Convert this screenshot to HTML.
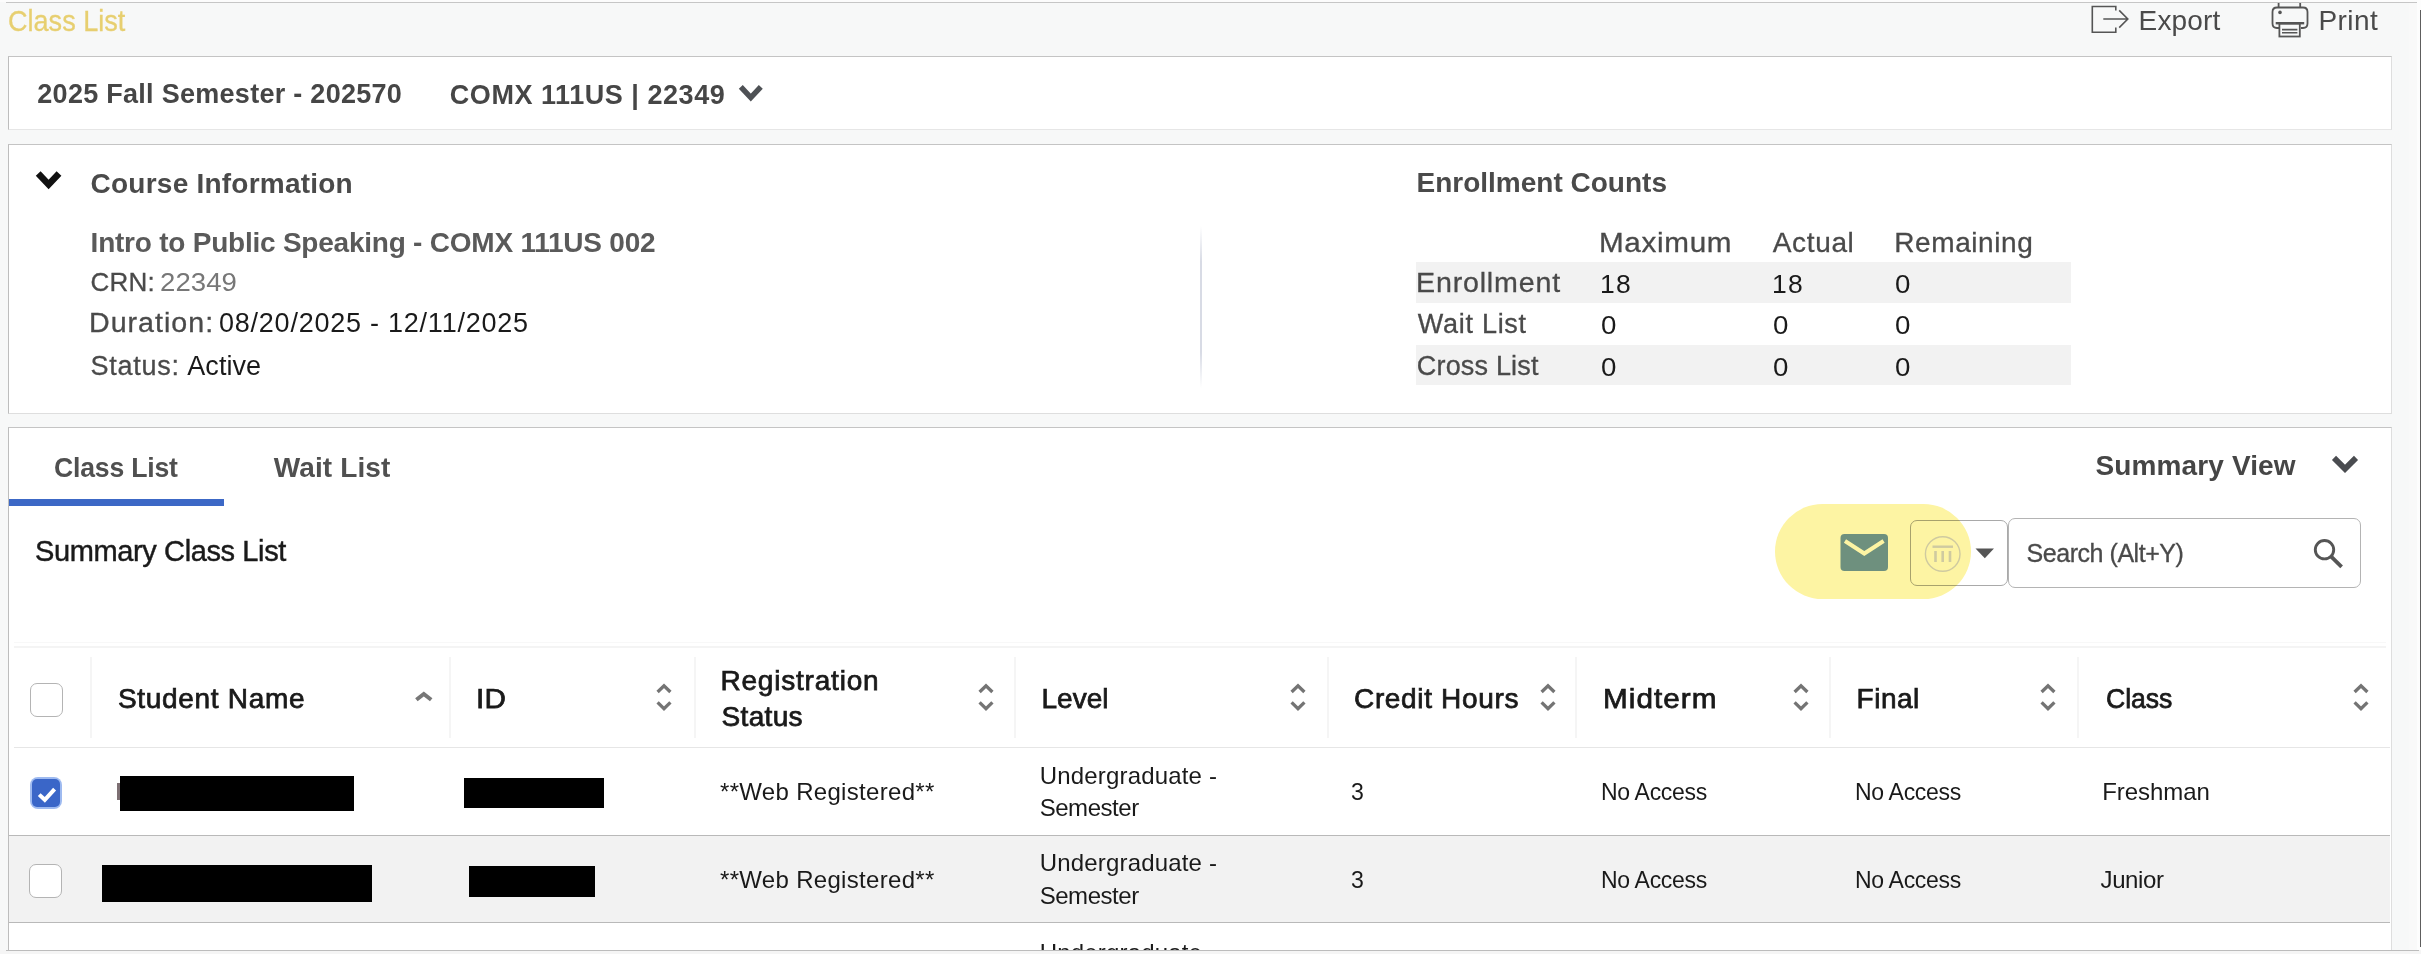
<!DOCTYPE html>
<html lang="en">
<head>
<meta charset="utf-8">
<title>Class List</title>
<style>
html,body{margin:0;padding:0}
body{width:2421px;height:954px;overflow:hidden;position:relative;background:#f7f8f8;font-family:"Liberation Sans",sans-serif}
.t{position:absolute;white-space:nowrap;line-height:1em;display:block}
.a{position:absolute;display:block}
.panel{position:absolute;background:#fff;box-sizing:border-box;border:1px solid #dedede;border-top-color:#c4c4c4;border-left-color:#bdbdbd}
.sep{position:absolute;width:2px;top:657px;height:81px;background:#f5f5f5}
.cb{position:absolute;box-sizing:border-box;background:#fff;border:1px solid #b4b4b4;border-radius:7px}
svg{position:absolute;overflow:visible}
</style>
</head>
<body>
<!-- window chrome lines -->
<div class="a" style="left:0;top:0;width:2421px;height:2px;background:#fcfcfc"></div>
<div class="a" style="left:6px;top:2px;width:2412px;height:1px;background:#c6c6c6"></div>
<div class="a" style="left:2409px;top:3px;width:8px;height:947px;background:#f9f9f9"></div>
<div class="a" style="left:2417px;top:0;width:4px;height:954px;background:#fdfdfd"></div>
<div class="a" style="left:2420px;top:10px;width:1px;height:937px;background:#5e5e5e"></div>

<header>
<span class="t" style="left:7.60px;top:6px;font-size:30px;color:#e7cf70;transform:scaleX(0.9021);transform-origin:0 0;-webkit-text-stroke:0.3px #e7cf70;">Class List</span>
<span class="t" style="left:2138.60px;top:7px;font-size:28px;letter-spacing:0.131px;color:#4a4a4a;">Export</span>
<span class="t" style="left:2318.40px;top:7px;font-size:28px;letter-spacing:0.452px;color:#4a4a4a;">Print</span>
<!-- export icon -->
<svg style="left:2088px;top:2px" width="44" height="36" viewBox="2088 2 44 36" fill="none" stroke="#555" stroke-width="1.6">
<path d="M2115.8 10.6V6.5H2092.3V32.2H2115.8V27.6"/>
<path d="M2103.3 19H2127.4M2119.2 10.4L2127.8 19L2119.2 27.6"/>
</svg>
<!-- print icon -->
<svg style="left:2268px;top:0" width="44" height="40" viewBox="2268 0 44 40" fill="none" stroke="#555" stroke-width="1.8">
<path d="M2278.6 3V7.5M2300.2 3V7.5"/>
<path d="M2279 28H2277Q2272.5 28 2272.5 23.5V12Q2272.5 7.5 2277 7.5H2303Q2307.5 7.5 2307.5 12V23.5Q2307.5 28 2303 28H2301"/>
<path d="M2275.7 23.2H2304.2" stroke-width="2.4"/>
<rect x="2279.4" y="23.6" width="20.4" height="12.9"/>
<path d="M2282 29.6H2297.4M2282 32.8H2297.4" stroke-width="1.6"/>
<circle cx="2280" cy="12.4" r="1.8" fill="#555" stroke="none"/>
</svg>
</header>

<main>
<!-- panel 1: term / course selector -->
<div role="region" aria-label="Term and course selector">
<section class="panel" style="left:8px;top:56px;width:2384px;height:74px;border-bottom-color:#e6e6e6"></section>
<span class="t" style="left:37.30px;top:81px;font-size:27px;letter-spacing:0.280px;color:#464646;font-weight:700;">2025 Fall Semester - 202570</span>
<span class="t" style="left:449.80px;top:82px;font-size:27px;letter-spacing:0.541px;color:#464646;font-weight:700;">COMX 111US | 22349</span>
<svg style="left:736px;top:83px" width="30" height="20" viewBox="736 83 30 20" fill="none" stroke="#4e5155" stroke-width="5.4"><path d="M740.8 86.8L750.8 97.6L760.8 86.8"/></svg>

</div>

<!-- panel 2: course info -->
<div role="region" aria-label="Course Information and Enrollment Counts">
<section class="panel" style="left:8px;top:144px;width:2384px;height:270px"></section>
<svg style="left:33px;top:169px" width="32" height="24" viewBox="33 169 32 24" fill="none" stroke="#111" stroke-width="6.6"><path d="M38.2 173.5L48.6 184.5L59 173.5"/></svg>
<div class="a" style="left:1200px;top:226px;width:2px;height:162px;background:linear-gradient(to bottom,rgba(216,219,229,0),#d8dbe5 22%,#d8dbe5 78%,rgba(216,219,229,0))"></div>
<div class="a" style="left:1416px;top:262px;width:655px;height:41px;background:#f2f2f2"></div>
<div class="a" style="left:1416px;top:345px;width:655px;height:40px;background:#f2f2f2"></div>
<span class="t" style="left:90.60px;top:170px;font-size:28px;letter-spacing:0.228px;color:#4a4a4a;font-weight:700;">Course Information</span>
<span class="t" style="left:90.60px;top:229px;font-size:28px;letter-spacing:-0.229px;color:#5a5a5a;font-weight:700;">Intro to Public Speaking - COMX 111US 002</span>
<span class="t" style="left:90.60px;top:269px;font-size:26px;letter-spacing:0.224px;color:#4a4a4a;-webkit-text-stroke:0.3px #4a4a4a;">CRN:</span>
<span class="t" style="left:159.94px;top:269px;font-size:26px;color:#777;transform:scaleX(1.0600);transform-origin:0 0;letter-spacing:0.073px;">22349</span>
<span class="t" style="left:89.48px;top:310px;font-size:27px;color:#4a4a4a;transform:scaleX(1.0600);transform-origin:0 0;letter-spacing:0.941px;-webkit-text-stroke:0.3px #4a4a4a;">Duration:</span>
<span class="t" style="left:219.00px;top:310px;font-size:27px;letter-spacing:0.762px;color:#1a1a1a;">08/20/2025 - 12/11/2025</span>
<span class="t" style="left:90.60px;top:353px;font-size:27px;letter-spacing:0.743px;color:#4a4a4a;-webkit-text-stroke:0.3px #4a4a4a;">Status:</span>
<span class="t" style="left:187.30px;top:353px;font-size:27px;letter-spacing:0.038px;color:#1a1a1a;">Active</span>
<span class="t" style="left:1416.50px;top:169px;font-size:28px;letter-spacing:0.002px;color:#4a4a4a;font-weight:700;">Enrollment Counts</span>
<span class="t" style="left:1598.88px;top:229px;font-size:28px;color:#4a4a4a;transform:scaleX(1.0600);transform-origin:0 0;letter-spacing:0.614px;-webkit-text-stroke:0.3px #4a4a4a;">Maximum</span>
<span class="t" style="left:1772.80px;top:229px;font-size:28px;letter-spacing:0.640px;color:#4a4a4a;-webkit-text-stroke:0.3px #4a4a4a;">Actual</span>
<span class="t" style="left:1894.30px;top:229px;font-size:28px;letter-spacing:0.578px;color:#4a4a4a;-webkit-text-stroke:0.3px #4a4a4a;">Remaining</span>
<span class="t" style="left:1415.68px;top:270px;font-size:27px;color:#4a4a4a;transform:scaleX(1.0600);transform-origin:0 0;letter-spacing:0.765px;-webkit-text-stroke:0.3px #4a4a4a;">Enrollment</span>
<span class="t" style="left:1417.80px;top:311px;font-size:27px;letter-spacing:0.723px;color:#4a4a4a;-webkit-text-stroke:0.3px #4a4a4a;">Wait List</span>
<span class="t" style="left:1416.80px;top:353px;font-size:27px;letter-spacing:0.186px;color:#4a4a4a;-webkit-text-stroke:0.3px #4a4a4a;">Cross List</span>
<span class="t" style="left:1599.94px;top:272px;font-size:25px;color:#1a1a1a;transform:scaleX(1.0600);transform-origin:0 0;letter-spacing:1.077px;">18</span>
<span class="t" style="left:1771.94px;top:272px;font-size:25px;color:#1a1a1a;transform:scaleX(1.0600);transform-origin:0 0;letter-spacing:1.077px;">18</span>
<span class="t" style="left:1895.40px;top:272px;font-size:25px;color:#1a1a1a;transform:scaleX(1.1077);transform-origin:0 0;">0</span>
<span class="t" style="left:1601.00px;top:313px;font-size:25px;color:#1a1a1a;transform:scaleX(1.1077);transform-origin:0 0;">0</span>
<span class="t" style="left:1773.00px;top:313px;font-size:25px;color:#1a1a1a;transform:scaleX(1.1077);transform-origin:0 0;">0</span>
<span class="t" style="left:1895.40px;top:313px;font-size:25px;color:#1a1a1a;transform:scaleX(1.1077);transform-origin:0 0;">0</span>
<span class="t" style="left:1601.00px;top:355px;font-size:25px;color:#1a1a1a;transform:scaleX(1.1077);transform-origin:0 0;">0</span>
<span class="t" style="left:1773.00px;top:355px;font-size:25px;color:#1a1a1a;transform:scaleX(1.1077);transform-origin:0 0;">0</span>
<span class="t" style="left:1895.40px;top:355px;font-size:25px;color:#1a1a1a;transform:scaleX(1.1077);transform-origin:0 0;">0</span>

</div>

<!-- panel 3: class list -->
<div role="region" aria-label="Summary Class List">
<section class="panel" style="left:8px;top:427px;width:2384px;height:540px"></section>
<div class="a" style="left:9px;top:499px;width:215px;height:7px;background:#3c68c6"></div>
<svg style="left:2330px;top:454px" width="30" height="22" viewBox="2330 454 30 22" fill="none" stroke="#4a4c50" stroke-width="5.8"><path d="M2334 457.9L2345 468.9L2356 457.9"/></svg>
<!-- toolbar -->
<div class="a" style="left:1910px;top:520px;width:98px;height:66px;box-sizing:border-box;border:1px solid #a9a9a9;border-radius:7px;background:#fff"></div>
<svg style="left:1973px;top:546px" width="24" height="14" viewBox="1973 546 24 14"><path d="M1975.5 548.6H1994L1984.8 558.2Z" fill="#555"/></svg>
<div class="a" style="left:1775px;top:504px;width:196px;height:95px;border-radius:48px;background:#fdf4a3;mix-blend-mode:multiply"></div>
<svg style="left:1840px;top:533px" width="50" height="40" viewBox="1840 533 50 40">
<rect x="1840.5" y="534" width="47.5" height="37" rx="4" fill="#6e907e"/>
<path d="M1845 541L1864.3 553.5L1883.6 541" fill="none" stroke="#fdf4a3" stroke-width="4"/>
</svg>
<svg style="left:1924px;top:535px" width="38" height="38" viewBox="1924 535 38 38" fill="none" stroke="#cfcaa0" stroke-width="1.4">
<circle cx="1942.7" cy="554" r="17.3"/>
<path d="M1932.5 546.7H1953" stroke-width="2.4"/>
<path d="M1935.5 551V562M1942.7 551V562M1950 551V562" stroke-width="2.6"/>
</svg>
<div class="a" style="left:2008px;top:518px;width:353px;height:70px;box-sizing:border-box;border:1px solid #b4b4b4;border-radius:7px;background:#fff"></div>
<svg style="left:2312px;top:537px" width="34" height="34" viewBox="2312 537 34 34" fill="none" stroke="#555" stroke-width="2.9"><circle cx="2324.5" cy="549.7" r="9.2"/><path d="M2331.2 556.6L2341.6 566.8" stroke-width="3.8"/></svg>
<span class="t" style="left:54.35px;top:454px;font-size:28px;color:#505050;transform:scaleX(0.9500);transform-origin:0 0;letter-spacing:-0.211px;font-weight:700;">Class List</span>
<span class="t" style="left:273.70px;top:454px;font-size:28px;letter-spacing:0.125px;color:#505050;font-weight:700;">Wait List</span>
<span class="t" style="left:2095.50px;top:452px;font-size:28px;letter-spacing:0.126px;color:#464646;font-weight:700;">Summary View</span>
<span class="t" style="left:35.00px;top:537px;font-size:29px;letter-spacing:-0.381px;color:#1a1a1a;-webkit-text-stroke:0.45px #1a1a1a;">Summary Class List</span>
<span class="t" style="left:2026.50px;top:541px;font-size:25px;letter-spacing:-0.449px;color:#4a4a4a;-webkit-text-stroke:0.3px #4a4a4a;">Search (Alt+Y)</span>

<!-- table -->
<div role="table" aria-label="Summary Class List">
<div role="row">
<div class="a" style="left:14px;top:642px;width:2372px;height:1px;background:#f8f8f8"></div>
<div class="a" style="left:14px;top:646px;width:2372px;height:2px;background:#f4f4f4"></div>
<div class="a" style="left:14px;top:747px;width:2376px;height:1px;background:#e6e6e6"></div>
<div class="sep" style="left:90px"></div>
<div class="sep" style="left:449px"></div>
<div class="sep" style="left:694px"></div>
<div class="sep" style="left:1014px"></div>
<div class="sep" style="left:1327px"></div>
<div class="sep" style="left:1575px"></div>
<div class="sep" style="left:1829px"></div>
<div class="sep" style="left:2077px"></div>
<div class="cb" style="left:30px;top:683px;width:33px;height:34px"></div>
<span class="t" style="left:117.90px;top:685px;font-size:28px;letter-spacing:0.698px;color:#1a1a1a;-webkit-text-stroke:0.75px #1a1a1a;">Student Name</span>
<span class="t" style="left:475.88px;top:685px;font-size:28px;color:#1a1a1a;transform:scaleX(1.0600);transform-origin:0 0;letter-spacing:0.126px;-webkit-text-stroke:0.75px #1a1a1a;">ID</span>
<span class="t" style="left:720.50px;top:667px;font-size:28px;letter-spacing:0.788px;color:#1a1a1a;-webkit-text-stroke:0.75px #1a1a1a;">Registration</span>
<span class="t" style="left:721.50px;top:703px;font-size:28px;letter-spacing:0.344px;color:#1a1a1a;-webkit-text-stroke:0.75px #1a1a1a;">Status</span>
<span class="t" style="left:1041.50px;top:685px;font-size:28px;letter-spacing:0.021px;color:#1a1a1a;-webkit-text-stroke:0.75px #1a1a1a;">Level</span>
<span class="t" style="left:1354.00px;top:685px;font-size:28px;letter-spacing:0.658px;color:#1a1a1a;-webkit-text-stroke:0.75px #1a1a1a;">Credit Hours</span>
<span class="t" style="left:1602.88px;top:685px;font-size:28px;color:#1a1a1a;transform:scaleX(1.0600);transform-origin:0 0;letter-spacing:0.997px;-webkit-text-stroke:0.75px #1a1a1a;">Midterm</span>
<span class="t" style="left:1856.60px;top:685px;font-size:28px;letter-spacing:0.483px;color:#1a1a1a;-webkit-text-stroke:0.75px #1a1a1a;">Final</span>
<span class="t" style="left:2105.65px;top:685px;font-size:28px;color:#1a1a1a;transform:scaleX(0.9500);transform-origin:0 0;letter-spacing:-0.030px;-webkit-text-stroke:0.75px #1a1a1a;">Class</span>
<svg style="left:413px;top:689px" width="22" height="16" viewBox="413 689 22 16" fill="none" stroke="#777" stroke-width="4"><path d="M416.4 699.8L423.8 694L431.2 699.8"/></svg>
<svg style="left:654.2px;top:682px" width="20" height="32" viewBox="654.2 682 20 32" fill="none" stroke="#747474" stroke-width="3.3"><path d="M657.8 692L664.2 685.8L670.6 692M657.8 702.4L664.2 708.7L670.6 702.4"/></svg>
<svg style="left:975.7px;top:682px" width="20" height="32" viewBox="975.7 682 20 32" fill="none" stroke="#747474" stroke-width="3.3"><path d="M979.3 692L985.7 685.8L992.1 692M979.3 702.4L985.7 708.7L992.1 702.4"/></svg>
<svg style="left:1287.7px;top:682px" width="20" height="32" viewBox="1287.7 682 20 32" fill="none" stroke="#747474" stroke-width="3.3"><path d="M1291.3 692L1297.7 685.8L1304.1 692M1291.3 702.4L1297.7 708.7L1304.1 702.4"/></svg>
<svg style="left:1537.5px;top:682px" width="20" height="32" viewBox="1537.5 682 20 32" fill="none" stroke="#747474" stroke-width="3.3"><path d="M1541.1 692L1547.5 685.8L1553.9 692M1541.1 702.4L1547.5 708.7L1553.9 702.4"/></svg>
<svg style="left:1791.0px;top:682px" width="20" height="32" viewBox="1791.0 682 20 32" fill="none" stroke="#747474" stroke-width="3.3"><path d="M1794.6 692L1801.0 685.8L1807.4 692M1794.6 702.4L1801.0 708.7L1807.4 702.4"/></svg>
<svg style="left:2037.9px;top:682px" width="20" height="32" viewBox="2037.9 682 20 32" fill="none" stroke="#747474" stroke-width="3.3"><path d="M2041.5 692L2047.9 685.8L2054.3 692M2041.5 702.4L2047.9 708.7L2054.3 702.4"/></svg>
<svg style="left:2350.8px;top:682px" width="20" height="32" viewBox="2350.8 682 20 32" fill="none" stroke="#747474" stroke-width="3.3"><path d="M2354.4 692L2360.8 685.8L2367.2 692M2354.4 702.4L2360.8 708.7L2367.2 702.4"/></svg>

</div>
<!-- row 1 -->
<div role="row">
<div class="a" style="left:9px;top:835px;width:2381px;height:1px;background:#b9b9b9"></div>
<div class="a" style="left:30px;top:777px;width:32px;height:32px;border-radius:8px;background:#9ebaf0"></div>
<div class="a" style="left:32px;top:779px;width:28px;height:28px;border-radius:5px;background:#3a66c8"></div>
<svg style="left:31px;top:778px" width="30" height="30" viewBox="31 778 30 30" fill="none" stroke="#fff" stroke-width="4"><path d="M39.2 794.6L44.8 799.8L54.6 789.2"/></svg>
<div class="a" style="left:117px;top:783px;width:4px;height:17px;background:#7d6f73"></div>
<div class="a" style="left:120px;top:776px;width:234px;height:35px;background:#000"></div>
<div class="a" style="left:464px;top:778px;width:140px;height:30px;background:#000"></div>
<span class="t" style="left:720.00px;top:780px;font-size:24px;letter-spacing:0.314px;color:#1a1a1a;">**Web Registered**</span>
<span class="t" style="left:1039.70px;top:764px;font-size:24px;letter-spacing:0.180px;color:#1a1a1a;">Undergraduate -</span>
<span class="t" style="left:1039.70px;top:796px;font-size:24px;letter-spacing:-0.459px;color:#1a1a1a;">Semester</span>
<span class="t" style="left:1351.00px;top:780px;font-size:24px;color:#1a1a1a;transform:scaleX(0.9615);transform-origin:0 0;">3</span>
<span class="t" style="left:1601.00px;top:781px;font-size:23px;letter-spacing:-0.303px;color:#1a1a1a;">No Access</span>
<span class="t" style="left:1855.00px;top:781px;font-size:23px;letter-spacing:-0.303px;color:#1a1a1a;">No Access</span>
<span class="t" style="left:2102.20px;top:780px;font-size:24px;letter-spacing:-0.055px;color:#1a1a1a;">Freshman</span>

</div>
<!-- row 2 -->
<div role="row">
<div class="a" style="left:9px;top:836px;width:2381px;height:86px;background:#f2f2f2"></div>
<div class="a" style="left:9px;top:922px;width:2381px;height:1px;background:#b9b9b9"></div>
<div class="cb" style="left:29px;top:864px;width:33px;height:34px"></div>
<div class="a" style="left:102px;top:865px;width:270px;height:37px;background:#000"></div>
<div class="a" style="left:469px;top:866px;width:126px;height:31px;background:#000"></div>
<span class="t" style="left:720.00px;top:868px;font-size:24px;letter-spacing:0.314px;color:#1a1a1a;">**Web Registered**</span>
<span class="t" style="left:1039.70px;top:851px;font-size:24px;letter-spacing:0.180px;color:#1a1a1a;">Undergraduate -</span>
<span class="t" style="left:1039.70px;top:884px;font-size:24px;letter-spacing:-0.459px;color:#1a1a1a;">Semester</span>
<span class="t" style="left:1351.00px;top:868px;font-size:24px;color:#1a1a1a;transform:scaleX(0.9615);transform-origin:0 0;">3</span>
<span class="t" style="left:1601.00px;top:869px;font-size:23px;letter-spacing:-0.303px;color:#1a1a1a;">No Access</span>
<span class="t" style="left:1855.00px;top:869px;font-size:23px;letter-spacing:-0.303px;color:#1a1a1a;">No Access</span>
<span class="t" style="left:2100.50px;top:868px;font-size:24px;letter-spacing:-0.375px;color:#1a1a1a;">Junior</span>

</div>
<!-- row 3 (clipped by window bottom) -->
<div role="row">
<div class="a" style="left:9px;top:923px;width:2381px;height:27px;overflow:hidden">
<div class="a" style="left:-9px;top:-923px">
<span class="t" style="left:1039.70px;top:941px;font-size:24px;letter-spacing:0.180px;color:#1a1a1a;">Undergraduate -</span>
</div>
</div>

</div>
</div>
</div>
</main>

<!-- bottom window edge -->
<div class="a" style="left:0;top:950px;width:2421px;height:4px;background:#f5f5f5"></div>
<div class="a" style="left:6px;top:950px;width:2413px;height:1px;background:#bcbcbc"></div>
</body>
</html>
